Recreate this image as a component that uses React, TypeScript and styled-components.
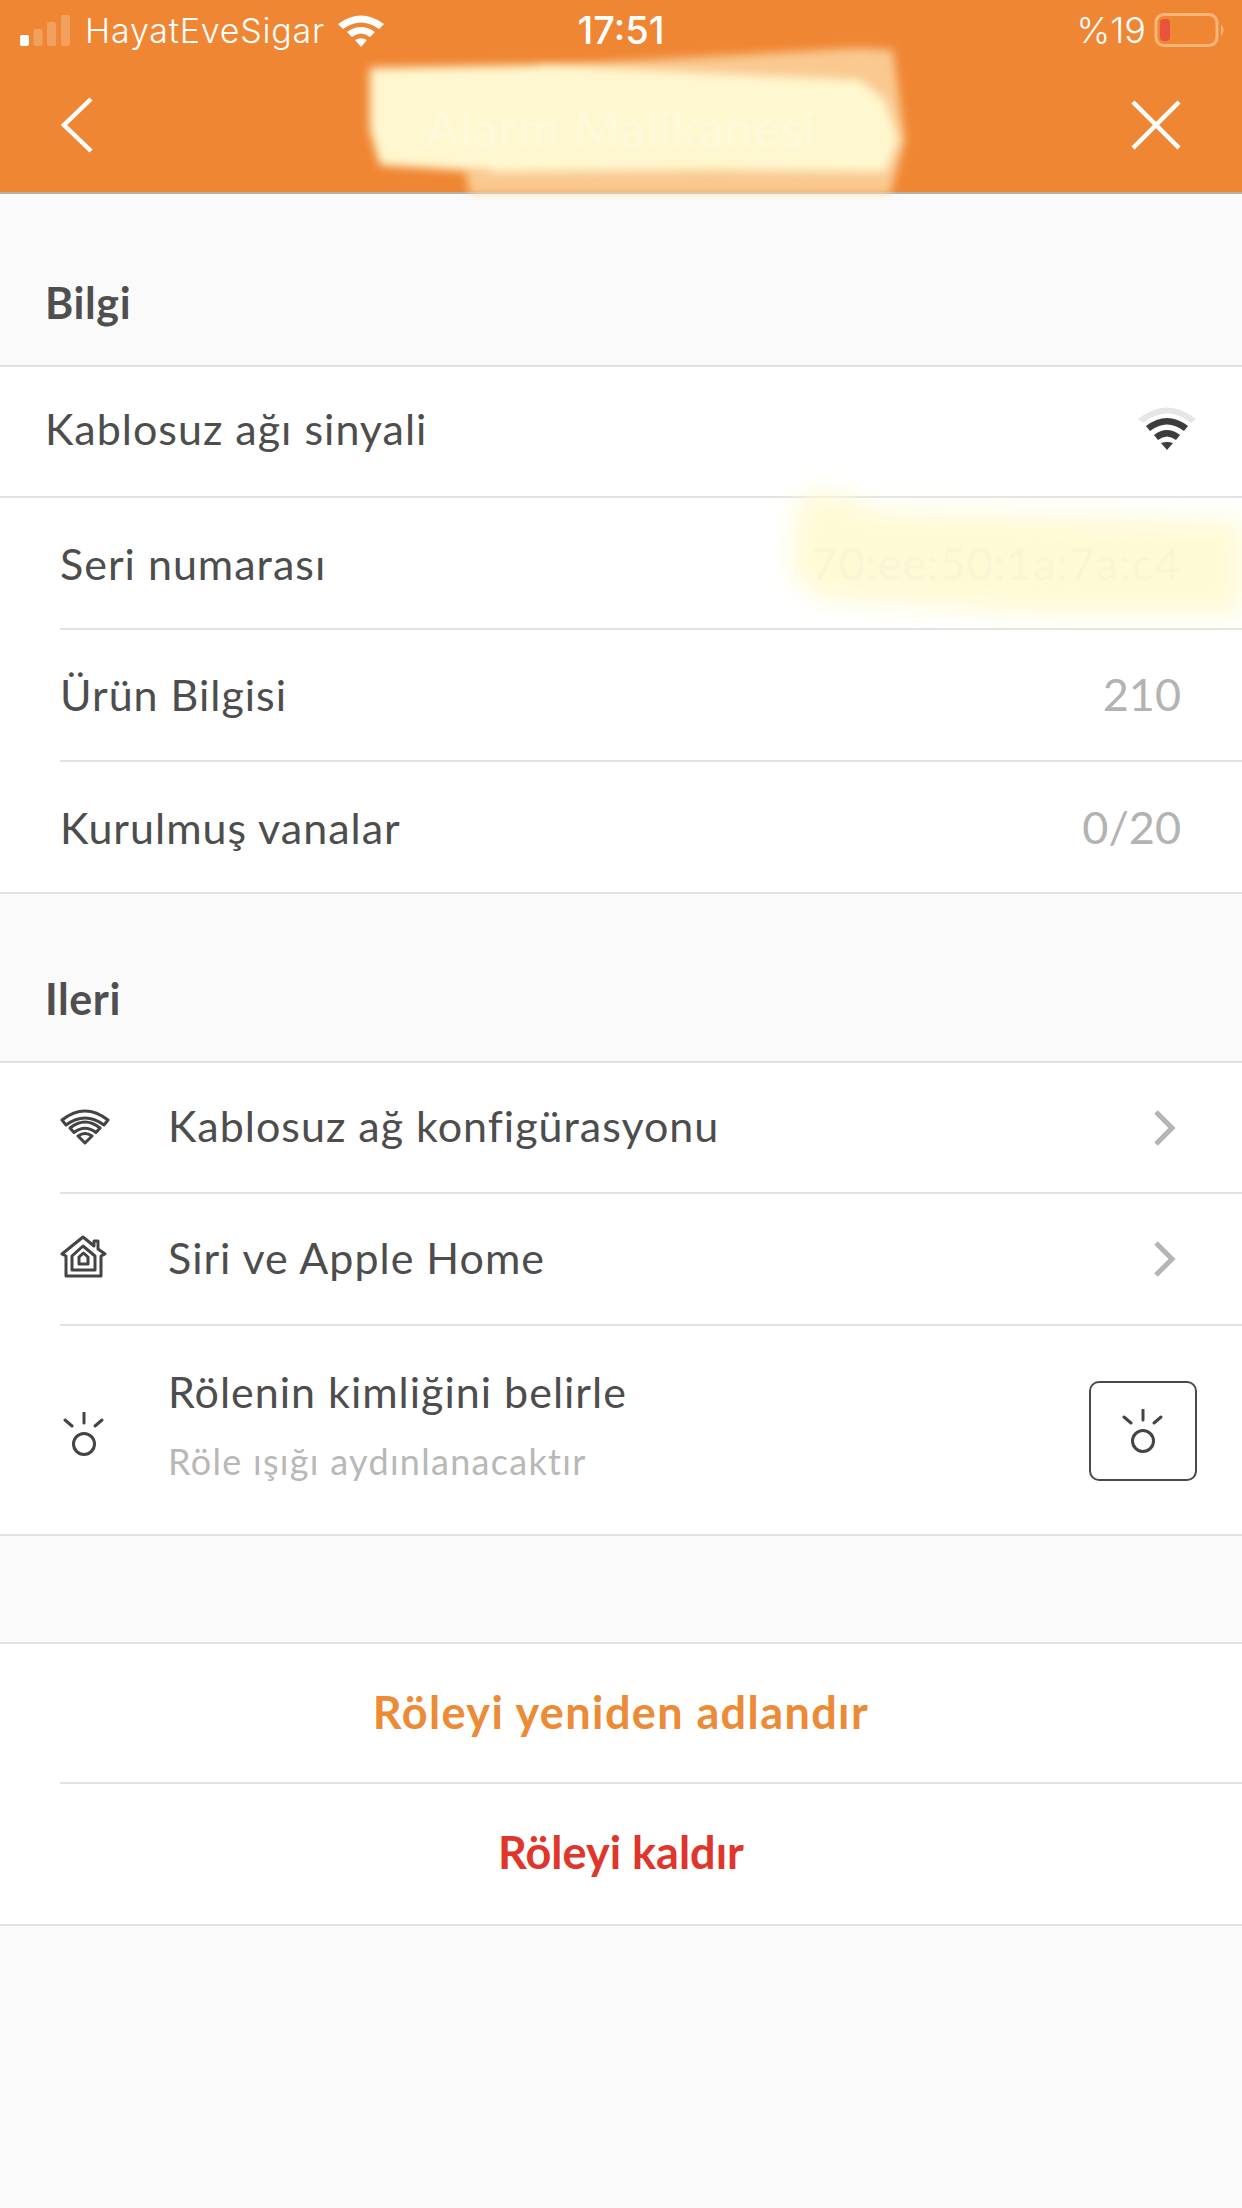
import React from "react";
import styled, { createGlobalStyle } from "styled-components";

const Global = createGlobalStyle`
  html, body { margin: 0; padding: 0; background: #fafafa; }
  body { font-family: "Lato", "Liberation Sans", sans-serif; }
  * { box-sizing: border-box; }
`;

const Page = styled.div`
  width: 1242px;
  height: 2208px;
  background: #fafafa;
  overflow: hidden;
`;

const Header = styled.header`
  height: 194px;
  background: #ef8633;
  border-bottom: 2px solid #b5b0aa;
  color: #fff;
  position: relative;
`;

const StatusBar = styled.div`
  height: 62px;
  padding: 0 16px 2px 20px;
  display: grid;
  grid-template-columns: 1fr auto 1fr;
  align-items: center;
  font-family: "Inter", "Liberation Sans", sans-serif;
  font-size: 34px;
  font-weight: 300;
`;

const StatusLeft = styled.div`
  display: flex;
  align-items: center;
  gap: 15px;
`;

const StatusRight = styled.div`
  display: flex;
  align-items: center;
  justify-content: flex-end;
  gap: 8px;
  font-size: 36px;
`;

const Clock = styled.div`
  font-weight: 500;
  font-size: 38px;
  margin-right: 4px;
`;

const Carrier = styled.span`
  letter-spacing: 0.8px;
  margin-right: -2px;
`;

const Nav = styled.div`
  height: 130px;
  padding: 0 61px 5px 58px;
  display: flex;
  align-items: center;
  justify-content: space-between;
`;

const Title = styled.div`
  position: absolute;
  left: 0;
  right: 0;
  top: 98px;
  text-align: center;
  font-size: 50px;
  letter-spacing: 1px;
  color: #fff9dc;
  z-index: 2;
`;

const Smudge = styled.svg`
  position: absolute;
  pointer-events: none;
`;

const TitleSmudge = styled(Smudge)`
  left: 340px;
  top: 30px;
  z-index: 1;
`;

const SerialSmudge = styled(Smudge)`
  left: 760px;
  top: 470px;
  z-index: 1;
`;

const SectionLabel = styled.div<{ $height: number }>`
  height: ${(p) => p.$height}px;
  padding: 0 0 39px 45px;
  display: flex;
  align-items: flex-end;
  font-size: 43px;
  letter-spacing: 0.6px;
  line-height: 1.1;
  font-weight: 700;
  color: #4f4f4f;
`;

const Group = styled.section`
  background: #fff;
  border-top: 2px solid #e2e2e2;
  border-bottom: 2px solid #e2e2e2;
`;

const Row = styled.div<{ $height: number; $lift?: number }>`
  height: ${(p) => p.$height}px;
  margin-left: 60px;
  padding-right: 45px;
  padding-bottom: ${(p) => p.$lift ?? 0}px;
  display: flex;
  align-items: center;
  justify-content: space-between;
  font-size: 43px;
  letter-spacing: 1px;
  color: #4d4d4d;
  border-bottom: 2px solid #e2e2e2;
`;

const LeadRow = styled(Row)`
  margin-left: 0;
  padding-left: 45px;
`;

const RowLast = styled(Row)`
  border-bottom: none;
`;

const Value = styled.span`
  color: #b3b3b3;
  font-size: 45px;
  letter-spacing: 0;
  padding-right: 16px;
`;

const SerialValue = styled(Value)`
  color: #f9f6d6;
  position: relative;
  z-index: 2;
  letter-spacing: 1px;
`;

const IconCell = styled.div`
  width: 108px;
  flex: none;
  display: flex;
  align-items: center;
`;

const BulbCell = styled(IconCell)`
  padding-left: 3px;
  padding-top: 8px;
`;

const Main = styled.div`
  flex: 1;
  display: flex;
  align-items: center;
`;

const TextStack = styled.div`
  display: flex;
  flex-direction: column;
  gap: 22px;
  margin-top: -12px;
`;

const Subtitle = styled.div`
  color: #b8b8b8;
  font-size: 36px;
  letter-spacing: 1.3px;
`;

const IdentifyButton = styled.div`
  width: 108px;
  height: 100px;
  margin-top: 2px;
  border: 2px solid #4a4a4a;
  border-radius: 10px;
  display: flex;
  align-items: center;
  justify-content: center;
`;

const Spacer = styled.div<{ $height: number }>`
  height: ${(p) => p.$height}px;
`;

const ChevronSlot = styled.div`
  margin: 4px 18px 0 0;
  display: flex;
`;

const Action = styled.div<{ $color: string; $spacing: number; $divider?: boolean }>`
  height: 140px;
  padding-bottom: 4px;
  display: flex;
  align-items: center;
  justify-content: center;
  font-size: 45px;
  font-weight: 700;
  letter-spacing: ${(p) => p.$spacing}px;
  color: ${(p) => p.$color};
  position: relative;
  ${(p) =>
    p.$divider
      ? `&::after { content: ""; position: absolute; left: 60px; right: 0; bottom: 0; height: 2px; background: #e2e2e2; }`
      : ""}
`;

const Chevron = () => (
  <ChevronSlot>
    <svg width="28" height="40" viewBox="0 0 28 40">
      <path d="M5 4 L21 20 L5 36" fill="none" stroke="#b5b5b5" strokeWidth="5" />
    </svg>
  </ChevronSlot>
);

const WifiOutline = () => (
  <svg width="50" height="38" viewBox="0 0 50 38">
    <path
      d="M2 13 Q25 -5 48 13 L44 18 Q25 4 6 18 Z M10 21 Q25 9 40 21 L36 25.500 Q25 17 14 25.500 Z M18 29 Q25 24 32 29 L25 36 Z"
      fill="none"
      stroke="#444"
      strokeWidth="3"
      strokeLinejoin="round"
    />
  </svg>
);

const HomeIcon = () => (
  <svg width="48" height="44" viewBox="0 0 48 44">
    <g fill="none" stroke="#444" strokeWidth="3" strokeLinejoin="round" strokeLinecap="round">
      <path d="M2 19 L23 2 L34 11 L34 6 L38 6 L38 14 L45 19 L41 21 L41 41 L6 41 L6 21 Z" />
      <path d="M12 21 L23 11 L35 21 L35 35 L12 35 Z" />
      <path d="M19 22 L23.500 18 L28 22 L28 29 L19 29 Z" />
    </g>
  </svg>
);

const BulbIcon = () => (
  <svg width="42" height="44" viewBox="0 0 42 44">
    <g fill="none" stroke="#444" strokeWidth="3" strokeLinecap="round">
      <circle cx="21" cy="32" r="10.500" />
      <path d="M21 1 L21 11" />
      <path d="M2 8 L9 14" />
      <path d="M39 8 L32 14" />
    </g>
  </svg>
);

const App = () => (
  <Page>
    <Global />
    <Header>
      <StatusBar>
        <StatusLeft>
          <svg width="50" height="31" viewBox="0 0 50 31">
            <rect x="0" y="20" width="9" height="11" rx="2" fill="#fff" />
            <rect x="13.500" y="14" width="9" height="17" rx="2" fill="#fff" opacity="0.22" />
            <rect x="27" y="7" width="9" height="24" rx="2" fill="#fff" opacity="0.22" />
            <rect x="41" y="0" width="9" height="31" rx="2" fill="#fff" opacity="0.22" />
          </svg>
          <Carrier>HayatEveSigar</Carrier>
          <svg width="46" height="33" viewBox="0 0 46 33">
            <path
              d="M0 10 Q23 -7 46 10 L41 15 Q23 2 5 15 Z M9 18 Q23 8 37 18 L32 23 Q23 16 14 23 Z M17 26 Q23 22.500 29 26 L23 33 Z"
              fill="#fff"
            />
          </svg>
        </StatusLeft>
        <Clock>17:51</Clock>
        <StatusRight>
          <span>%19</span>
          <svg width="72" height="34" viewBox="0 0 72 34">
            <rect x="2" y="1.500" width="61" height="31" rx="8" fill="none" stroke="#f8b678" strokeWidth="3" />
            <rect x="6" y="6" width="10" height="22" rx="4" fill="#e8533f" />
            <path d="M67 11 Q72 17 67 23 Z" fill="#f8b678" />
          </svg>
        </StatusRight>
      </StatusBar>
      <Nav>
        <svg width="36" height="56" viewBox="0 0 36 56">
          <path d="M33 2 L6 28 L33 54" fill="none" stroke="#fff" strokeWidth="4.500" />
        </svg>
        <svg width="50" height="50" viewBox="0 0 50 50">
          <path d="M2 2 L48 48 M48 2 L2 48" fill="none" stroke="#fff" strokeWidth="4.500" />
        </svg>
      </Nav>
      <TitleSmudge width="580" height="170" viewBox="0 0 580 170">
        <defs>
          <filter id="soft" x="-10%" y="-20%" width="120%" height="140%">
            <feGaussianBlur stdDeviation="5" />
          </filter>
        </defs>
        <path d="M200 36 L520 18 L553 20 L565 110 L550 165 L420 165 L130 165 L125 140 L150 140 Z" fill="#fde0b0" opacity="0.75" filter="url(#soft)" />
        <path d="M30 38 L200 35 L520 50 L545 70 L558 110 L545 142 L370 140 L150 142 L40 135 L30 100 Z" fill="#fff7cf" filter="url(#soft)" />
      </TitleSmudge>
      <Title>Alarm Malikanesi</Title>
    </Header>

    <SectionLabel $height={171}>Bilgi</SectionLabel>
    <Group>
      <LeadRow $height={131} $lift={6}>
        <span>Kablosuz ağı sinyali</span>
        <svg width="60" height="46" viewBox="0 0 60 46">
          <path d="M1 13 Q30 -10 59 13 L54 17 Q30 -2 6 17 Z" fill="#e6e6e6" />
          <path d="M9 20 Q30 4 51 20 L47 25 Q30 12 13 25 Z M17 29 Q30 19 43 29 L39 34 Q30 27 21 34 Z M24 37 Q30 35 36 37 L30 44 Z" fill="#3c3c3c" />
        </svg>
      </LeadRow>
      <Row $height={132}>
        <span>Seri numarası</span>
        <SerialValue>70:ee:50:1a:7a:c4</SerialValue>
      </Row>
      <Row $height={132} $lift={2}>
        <span>Ürün Bilgisi</span>
        <Value>210</Value>
      </Row>
      <RowLast $height={130}>
        <span>Kurulmuş vanalar</span>
        <Value>0/20</Value>
      </RowLast>
    </Group>

    <SectionLabel $height={167}>Ileri</SectionLabel>
    <Group>
      <Row $height={131} $lift={4}>
        <Main>
          <IconCell><WifiOutline /></IconCell>
          <span>Kablosuz ağ konfigürasyonu</span>
        </Main>
        <Chevron />
      </Row>
      <Row $height={132} $lift={4}>
        <Main>
          <IconCell><HomeIcon /></IconCell>
          <span>Siri ve Apple Home</span>
        </Main>
        <Chevron />
      </Row>
      <RowLast $height={208}>
        <Main>
          <BulbCell><BulbIcon /></BulbCell>
          <TextStack>
            <span>Rölenin kimliğini belirle</span>
            <Subtitle>Röle ışığı aydınlanacaktır</Subtitle>
          </TextStack>
        </Main>
        <IdentifyButton><BulbIcon /></IdentifyButton>
      </RowLast>
    </Group>

    <Spacer $height={106} />
    <Group>
      <Action $color="#ec8a35" $spacing={1.4} $divider>Röleyi yeniden adlandır</Action>
      <Action $color="#e0352b" $spacing={0}>Röleyi kaldır</Action>
    </Group>

    <SerialSmudge width="482" height="170" viewBox="0 0 482 170">
      <defs>
        <filter id="softS" x="-10%" y="-20%" width="120%" height="140%">
          <feGaussianBlur stdDeviation="12" />
        </filter>
      </defs>
      <path d="M38 30 Q70 10 110 40 L482 50 L482 145 L300 145 L60 130 L30 100 Z" fill="#fffad6" filter="url(#softS)" />
    </SerialSmudge>
  </Page>
);

export default App;
